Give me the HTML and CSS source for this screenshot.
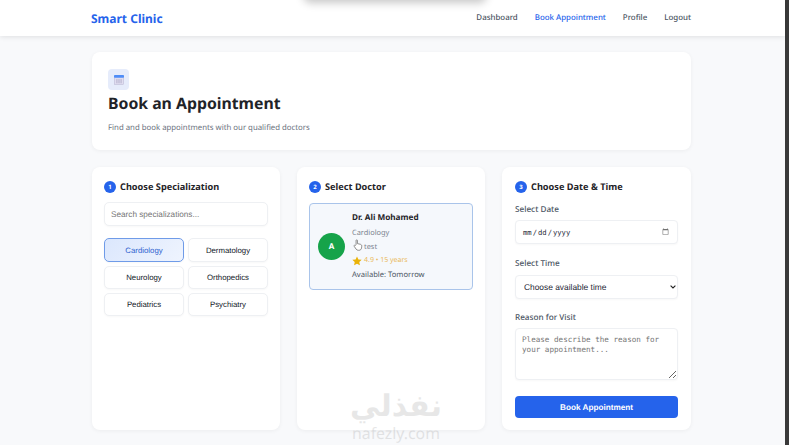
FILE: index.html
```html
<!DOCTYPE html>
<html lang="en">
<head>
	<meta charset="UTF-8">
	<title>Smart Clinic</title>
	<link rel="stylesheet" href="styles.css">
</head>
<body>
	<div class="page">
		<div class="top-blob"></div>
		<nav class="navbar">
			<a class="brand" href="#">Smart Clinic</a>
			<div class="nav-links">
				<a href="#">Dashboard</a>
				<a href="#" class="active">Book Appointment</a>
				<a href="#">Profile</a>
				<a href="#">Logout</a>
			</div>
		</nav>

		<main class="main">
			<section class="card page-head">
				<div class="head-icon">
					<svg width="10" height="11" viewBox="0 0 12 13">
						<rect x="0.5" y="2.5" width="11" height="10" fill="#e0ddf0" stroke="#b5b3cf" stroke-width="0.6"/>
						<rect x="0" y="1" width="12" height="3.5" rx="1" fill="#4f8df7"/>
						<path d="M3.5 6v5M6 6v5M8.5 6v5" stroke="#a5a2c0" stroke-width="0.9"/>
					</svg>
				</div>
				<h1>Book an Appointment</h1>
				<p>Find and book appointments with our qualified doctors</p>
			</section>

			<div class="steps">
				<section class="card step">
					<h2><span class="num">1</span>Choose Specialization</h2>
					<input class="search" type="text" placeholder="Search specializations...">
					<div class="spec-grid">
						<button class="spec selected">Cardiology</button>
						<button class="spec">Dermatology</button>
						<button class="spec">Neurology</button>
						<button class="spec">Orthopedics</button>
						<button class="spec">Pediatrics</button>
						<button class="spec">Psychiatry</button>
					</div>
				</section>

				<section class="card step">
					<h2><span class="num">2</span>Select Doctor</h2>
					<div class="doctor">
						<div class="avatar">A</div>
						<div class="doc-info">
							<div class="doc-name">Dr. Ali Mohamed</div>
							<div class="doc-spec">Cardiology</div>
							<div class="doc-test">test</div>
							<div class="doc-rate">
								<svg width="10" height="10" viewBox="0 0 24 24"><path d="M12 1l3.4 7.2 7.8 1-5.7 5.4 1.5 7.8L12 18.6l-7 3.8 1.5-7.8L.8 9.2l7.8-1z" fill="#eab308"/></svg>
								4.9 • 15 years
							</div>
							<div class="doc-avail">Available: Tomorrow</div>
						</div>
						<svg class="hand" width="10" height="12" viewBox="0 0 12 15">
							<path d="M3.6 7.2V1.9c0-1.2 1.7-1.2 1.7 0v3.9l3.6.8c1.2.3 1.9 1.1 1.8 2.4l-.3 2.2c-.2 1.6-1.3 2.9-3.2 2.9H6.3c-1.2 0-2-.5-2.7-1.5L1.2 9.1c-.6-1 .7-2 1.5-1.1z" fill="#fff" stroke="#666" stroke-width="0.9"/>
						</svg>
					</div>
				</section>

				<section class="card step step-date">
					<h2><span class="num">3</span>Choose Date &amp; Time</h2>
					<label class="field-label first">Select Date</label>
					<input class="field date" type="date">
					<label class="field-label">Select Time</label>
					<div class="select-wrap">
						<select class="field time">
							<option>Choose available time</option>
						</select>
						<svg class="chevron" width="6" height="4" viewBox="0 0 6 4"><path d="M.6.6 3 3l2.4-2.4" fill="none" stroke="#222" stroke-width="1.1"/></svg>
					</div>
					<label class="field-label">Reason for Visit</label>
					<textarea class="field reason" placeholder="Please describe the reason for your appointment..."></textarea>
					<button class="book">Book Appointment</button>
				</section>
			</div>
		</main>

		<div class="watermark">
			<div class="wm-ar">نفذلي</div>
			<div class="wm-en">nafezly.com</div>
		</div>
	</div>
	<div class="edge"></div>
</body>
</html>
```

FILE: styles.css
```css
* {
	box-sizing: border-box;
}

html, body {
	height: 100%;
	overflow: hidden;
}

body {
	margin: 0;
	display: flex;
	font-family: "Noto Sans", "Open Sans", sans-serif;
	color: #1f2937;
	background-color: #f8f9fb;
	text-rendering: geometricPrecision;
}

input, select, textarea, button {
	text-rendering: geometricPrecision;
}

.page {
	flex: 1;
	min-width: 0;
	position: relative;
}

.edge {
	width: 4px;
	background-color: #3a3a3a;
}

.top-blob {
	position: absolute;
	top: -12px;
	left: 305px;
	width: 180px;
	height: 12px;
	border-radius: 8px;
	box-shadow: 0 1px 9px 2px rgba(0, 0, 0, .22);
	z-index: 2;
}

.navbar {
	height: 36px;
	padding: 0 94px 0 91px;
	display: flex;
	align-items: center;
	justify-content: space-between;
	background-color: #fff;
	box-shadow: 0 1px 5px rgba(0, 0, 0, .1);
}

.brand {
	font-size: 12px;
	font-weight: 700;
	color: #2563eb;
	text-decoration: none;
}

.nav-links {
	display: flex;
	gap: 17px;
}

.nav-links a {
	font-size: 7.9px;
	font-weight: 500;
	color: #4b5563;
	text-decoration: none;
}

.nav-links a.active {
	color: #2563eb;
}

.main {
	width: 599px;
	margin: 16px 0 0 92px;
}

.card {
	background-color: #fff;
	border-radius: 8px;
	box-shadow: 0 1px 4px rgba(0, 0, 0, .05);
}

.page-head {
	height: 98px;
	padding: 17px 16px 0;
}

.head-icon {
	width: 21px;
	height: 21px;
	border-radius: 4px;
	background-color: #e6ecfb;
	display: flex;
	align-items: center;
	justify-content: center;
}

.page-head h1 {
	margin: 2px 0 0;
	font-size: 15.8px;
	line-height: 23px;
	font-weight: 700;
	color: #1f2328;
}

.page-head p {
	margin: 7px 0 0;
	font-size: 7.8px;
	line-height: 12px;
	color: #6b7280;
}

.steps {
	margin-top: 17px;
	display: grid;
	grid-template-columns: 188px 188px 189px;
	gap: 17px;
}

.step {
	height: 263px;
	padding: 13px 12px 0;
	display: flex;
	flex-direction: column;
}

.step-date {
	padding: 13px 13px 0;
}

.step h2 {
	margin: 0;
	display: flex;
	align-items: center;
	gap: 4px;
	font-size: 9.2px;
	line-height: 14px;
	font-weight: 700;
	color: #1f2328;
}

.num {
	width: 12px;
	height: 12px;
	border-radius: 50%;
	background-color: #2563eb;
	color: #fff;
	font-size: 6px;
	display: flex;
	align-items: center;
	justify-content: center;
}

.search {
	margin-top: 8px;
	height: 24px;
	padding: 0 6px;
	border: 1px solid #eef0f3;
	border-radius: 5px;
	font-family: "Liberation Sans", sans-serif;
	font-size: 8.2px;
	outline: none;
	box-shadow: 0 1px 2px rgba(0, 0, 0, .03);
}

.search::placeholder {
	color: #757575;
}

.spec-grid {
	margin-top: 12px;
	display: grid;
	grid-template-columns: 80px 80px;
	grid-template-rows: 24px 23px 23px;
	gap: 4px;
}

.spec {
	padding: 0;
	border: 1px solid #eef0f3;
	border-radius: 5px;
	background-color: #fff;
	font-family: "Liberation Sans", sans-serif;
	font-size: 7.8px;
	color: #111827;
	box-shadow: 0 1px 2px rgba(0, 0, 0, .03);
}

.spec.selected {
	border: 1.5px solid #6f9be8;
	background: linear-gradient(135deg, #dbe7fd, #eff4fe);
	color: #2f63d0;
}

.doctor {
	position: relative;
	margin-top: 9px;
	height: 87px;
	padding: 0 8px;
	border: 1px solid #a9c4ea;
	border-radius: 4px;
	background-color: #f5f8fc;
	display: flex;
	align-items: center;
	gap: 7px;
}

.avatar {
	width: 27px;
	height: 27px;
	border-radius: 50%;
	background-color: #16a34a;
	color: #fff;
	font-size: 8px;
	font-weight: 700;
	display: flex;
	align-items: center;
	justify-content: center;
}

.doc-info {
	font-size: 7.6px;
	line-height: 14px;
}

.doc-name {
	font-size: 8.2px;
	font-weight: 700;
	color: #1f2328;
	margin-bottom: 0.5px;
}

.doc-spec {
	font-size: 7.4px;
	color: #7b8490;
}

.doc-test {
	padding-left: 12px;
	color: #7b8490;
	font-size: 7.4px;
}

.doc-rate {
	display: flex;
	align-items: center;
	gap: 2px;
	color: #eab85a;
	font-size: 7px;
}

.doc-avail {
	color: #4b5563;
}

.hand {
	position: absolute;
	left: 43px;
	top: 35px;
}

.field-label {
	font-size: 8.2px;
	line-height: 12px;
	font-weight: 500;
	color: #4b5563;
}

.field-label.first {
	margin-top: 10px;
}

.field {
	width: 100%;
	border: 1px solid #eef0f3;
	border-radius: 4px;
	background-color: #fff;
	color: #1f2937;
	outline: none;
	box-shadow: 0 1px 2px rgba(0, 0, 0, .03);
}

.date {
	height: 24px;
	margin: 4px 0 14px;
	padding: 0 6px;
	font-family: "DejaVu Sans Mono", monospace;
	font-size: 7.2px;
}

.date::-webkit-calendar-picker-indicator {
	opacity: .55;
}

.select-wrap {
	position: relative;
	display: flex;
}

.time {
	appearance: none;
	height: 24px;
	margin: 5px 0 13px;
	padding: 0 8px;
	font-family: "Liberation Sans", sans-serif;
	font-size: 8.4px;
}

.chevron {
	position: absolute;
	right: 2px;
	top: 15px;
}

.reason {
	height: 52px;
	margin: 4px 0 16px;
	padding: 6px;
	font-family: "DejaVu Sans Mono", monospace;
	font-size: 7.6px;
	line-height: 10px;
}

.reason::placeholder {
	color: #757575;
}

.book {
	height: 22px;
	border: 0;
	border-radius: 4px;
	background-color: #2563eb;
	color: #fff;
	font-family: "Liberation Sans", sans-serif;
	font-size: 8.2px;
	font-weight: 700;
}

.watermark {
	position: absolute;
	left: 340px;
	top: 388px;
	width: 112px;
	text-align: center;
	color: #000;
	opacity: .09;
	pointer-events: none;
}

.wm-ar {
	font-family: "DejaVu Sans", sans-serif;
	font-size: 30px;
	font-weight: 700;
	line-height: 38px;
}

.wm-en {
	font-family: "Noto Sans", sans-serif;
	font-size: 15.8px;
	line-height: 14px;
}
```
